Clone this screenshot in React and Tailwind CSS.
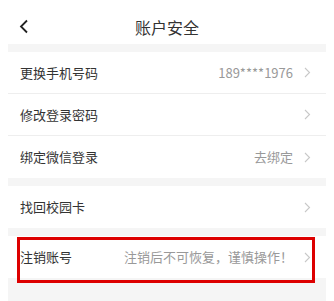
import React from "react";

function Chevron() {
  return (
    <svg width="7" height="11" viewBox="0 0 7 11" className="shrink-0">
      <path d="M1 1 L5.5 5.5 L1 10" fill="none" stroke="#c8c8c8" strokeWidth="1.1" />
    </svg>
  );
}

function Row({ label, value, border = true }) {
  return (
    <div className={`h-[42px] flex items-center pl-[12px] pr-[15px] ${border ? "border-b border-[#eeeeee]" : ""}`}>
      <span className="text-[13px] text-[#333333] flex-1">{label}</span>
      {value && <span className="text-[13px] text-[#999999] mr-[11px]">{value}</span>}
      {!value && <span className="mr-[11px]" />}
      <Chevron />
    </div>
  );
}

export default function App() {
  return (
    <div
      className="relative w-[334px] h-[301px] bg-white px-2 overflow-hidden flex flex-col"
      style={{ fontFamily: '"Noto Sans CJK SC", "Noto Sans", sans-serif' }}
    >
      <div className="relative h-[44px] flex items-center justify-center pt-[10px] shrink-0">
        <svg width="10" height="15" viewBox="0 0 10 15" className="absolute left-[11px] top-[19px]">
          <path d="M8 1.5 L2 7.5 L8 13.5" fill="none" stroke="#222222" strokeWidth="1.8" />
        </svg>
        <span className="text-[16px] text-[#333333]">账户安全</span>
      </div>
      <div className="flex-1 bg-[#f5f5f5] pt-2 flex flex-col gap-2">
        <div className="bg-white">
          <Row label="更换手机号码" value="189****1976" />
          <Row label="修改登录密码" />
          <Row label="绑定微信登录" value="去绑定" border={false} />
        </div>
        <div className="bg-white">
          <Row label="找回校园卡" border={false} />
        </div>
        <div className="bg-white">
          <Row label="注销账号" value="注销后不可恢复，谨慎操作！" border={false} />
        </div>
      </div>
      <div className="absolute left-[17px] top-[237px] w-[298px] h-[46px] border-[3px] border-[#dd0000]" />
    </div>
  );
}
